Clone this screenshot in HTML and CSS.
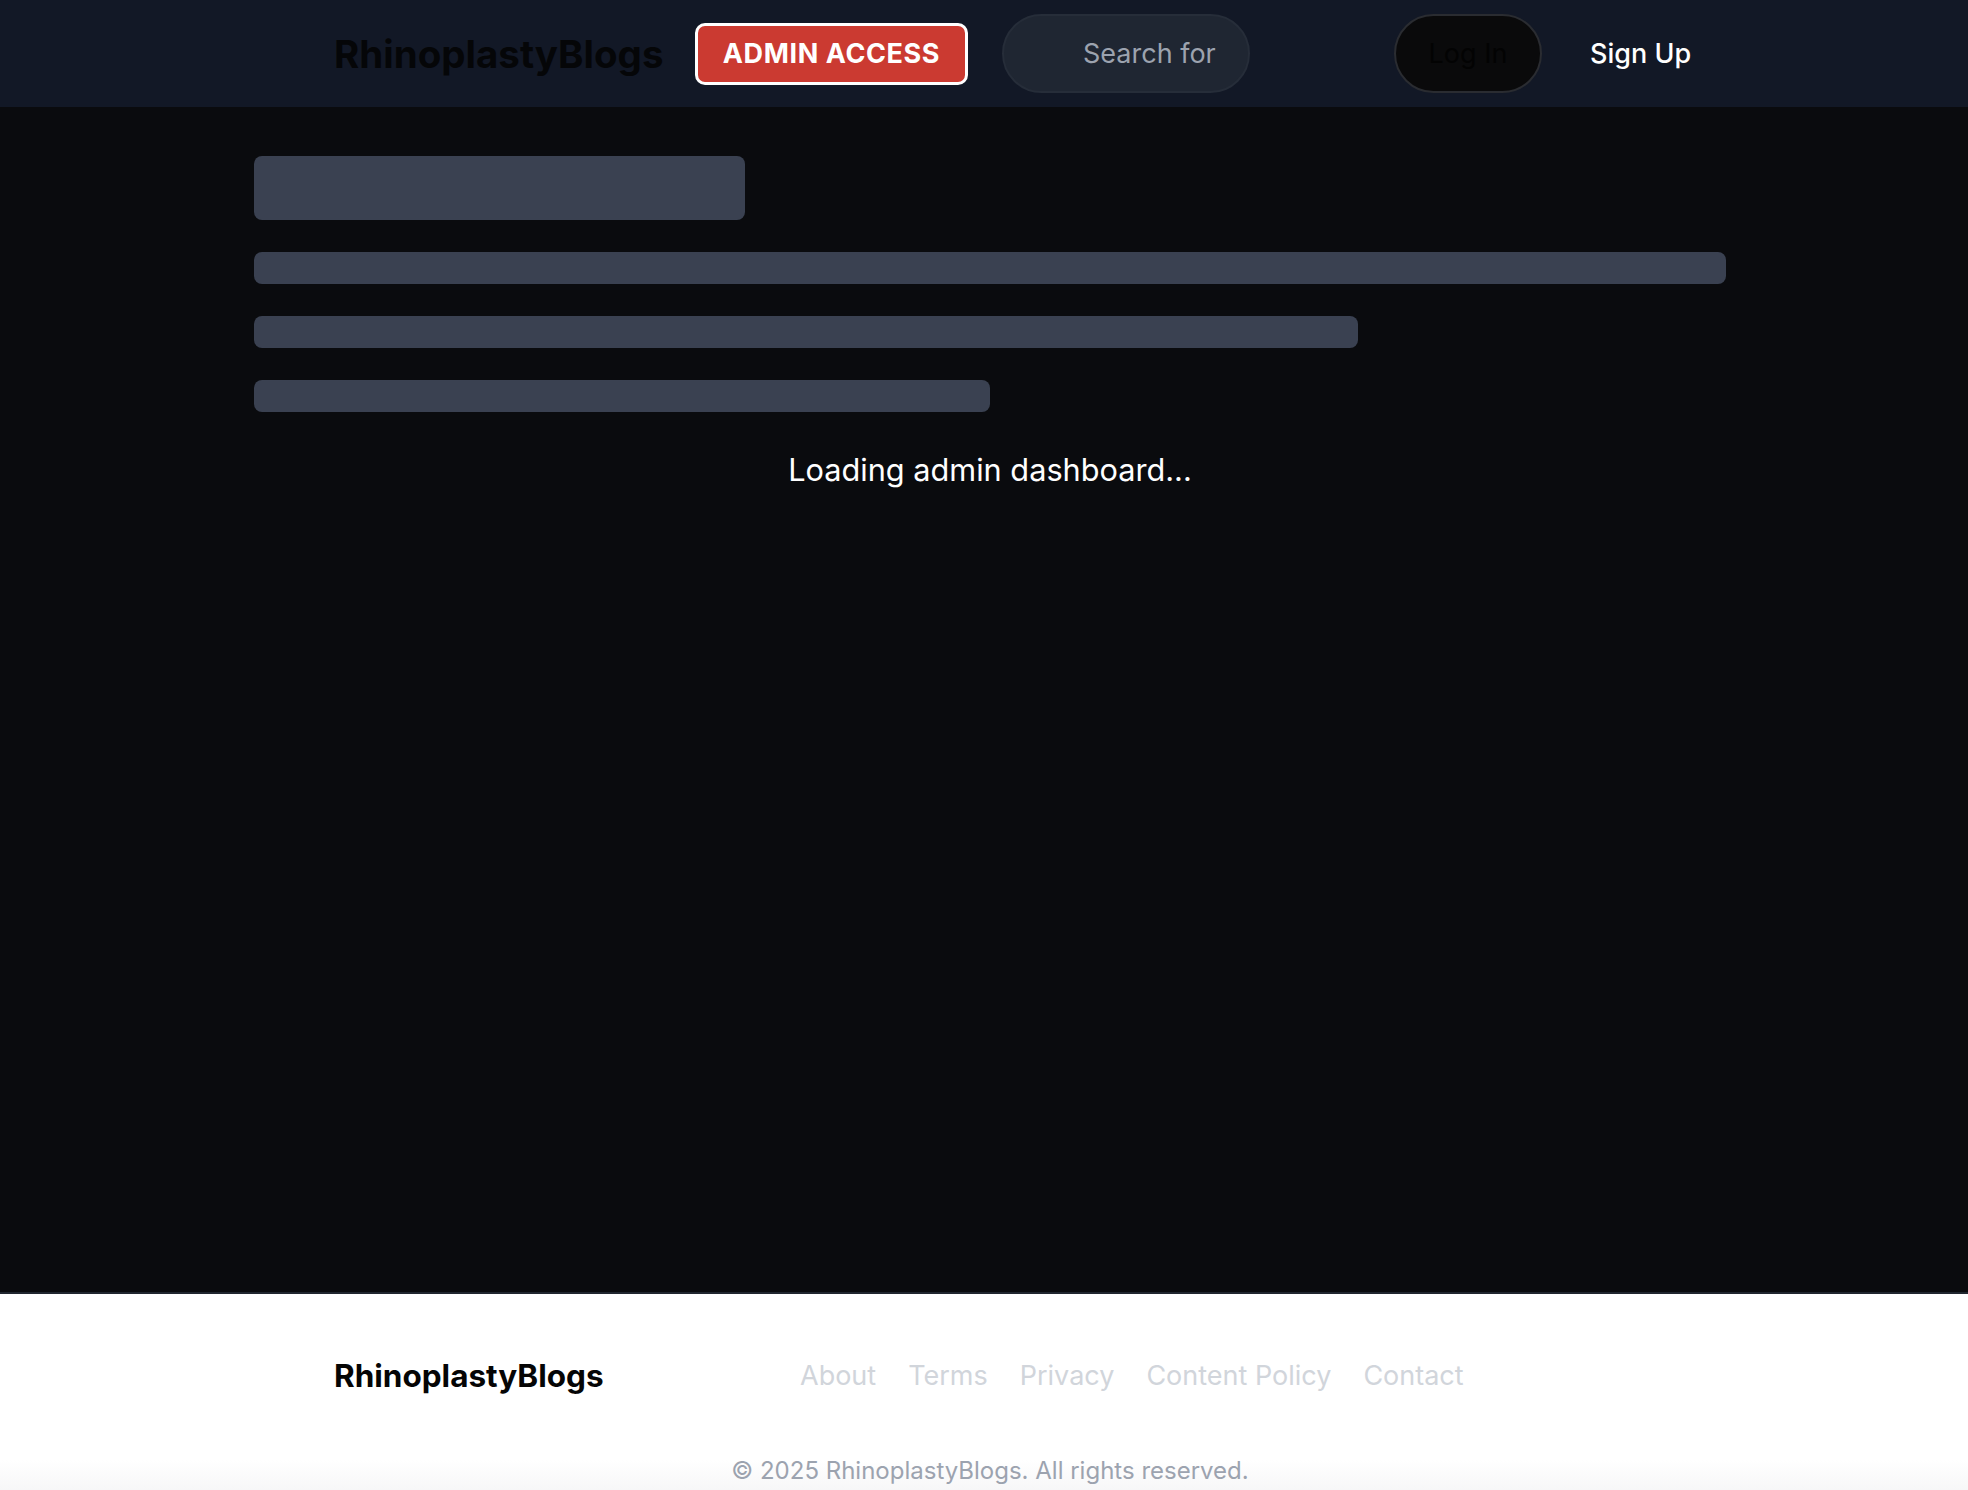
FILE: index.html
```html
<!DOCTYPE html>
<html lang="en">
<head>
<meta charset="utf-8">
<title>RhinoplastyBlogs – Admin</title>
<link rel="stylesheet" href="styles.css">
</head>
<body>
<header class="site-header">
  <a class="brand" href="#">RhinoplastyBlogs</a>
  <a class="admin-btn" href="#">ADMIN ACCESS</a>
  <div class="search"><span class="search-text">Search for</span></div>
  <a class="login-btn" href="#">Log In</a>
  <a class="signup" href="#">Sign Up</a>
</header>

<main class="main">
  <div class="container">
    <div class="skel skel-title"></div>
    <div class="skel skel-line w-full"></div>
    <div class="skel skel-line w-3q"></div>
    <div class="skel skel-line w-half"></div>
    <p class="loading">Loading admin dashboard...</p>
  </div>
</main>

<footer class="site-footer">
  <div class="container">
    <div class="footer-row">
      <div class="footer-brand">RhinoplastyBlogs</div>
      <nav class="footer-links">
        <a href="#">About</a>
        <a href="#">Terms</a>
        <a href="#">Privacy</a>
        <a href="#">Content Policy</a>
        <a href="#">Contact</a>
      </nav>
    </div>
    <p class="copyright">© 2025 RhinoplastyBlogs. All rights reserved.</p>
  </div>
</footer>
</body>
</html>
```

FILE: styles.css
```css
* { box-sizing: border-box; }
html, body { margin: 0; padding: 0; }
body {
  background: #0a0b0e;
  font-family: Inter, "Noto Sans", "Liberation Sans", sans-serif;
  color: #fff;
}
a { text-decoration: none; color: inherit; }

.site-header {
  height: 107px;
  background: #121826;
  display: flex;
  align-items: center;
  padding-left: 334px;
}
.brand {
  flex: none;
  width: 329px;
  margin-right: 32px;
  font-size: 38.5px;
  font-weight: 700;
  color: #050608;
  white-space: nowrap;
}
.admin-btn {
  flex: none;
  width: 273px;
  height: 62px;
  margin-right: 34px;
  border: 3px solid #ffffff;
  border-radius: 10px;
  background: #cb3a31;
  color: #fff;
  font-size: 27px;
  font-weight: 700;
  letter-spacing: 0.6px;
  display: flex;
  align-items: center;
  justify-content: center;
}
.search {
  flex: none;
  width: 248px;
  height: 79px;
  margin-right: 144px;
  border: 2px solid #262d39;
  border-radius: 40px;
  background: #1f2632;
  display: flex;
  align-items: center;
  padding-left: 79px;
}
.search-text {
  font-size: 27px;
  color: #9ca3af;
  white-space: nowrap;
}
.login-btn {
  flex: none;
  width: 148px;
  height: 79px;
  margin-right: 48px;
  border: 2px solid #2a2c31;
  border-radius: 40px;
  background: #0a0a0b;
  color: #030303;
  font-size: 27px;
  display: flex;
  align-items: center;
  justify-content: center;
}
.signup {
  flex: none;
  font-size: 27px;
  font-weight: 500;
  color: #ffffff;
  white-space: nowrap;
}

.main {
  min-height: 1185px;
  padding-top: 49px;
}
.container {
  width: 1472px;
  margin-left: 254px;
}
.skel {
  background: #3a4151;
  border-radius: 8px;
}
.skel-title {
  width: 33.33%;
  height: 64px;
  margin-bottom: 32px;
}
.skel-line {
  height: 32px;
  margin-bottom: 32px;
}
.w-full { width: 100%; }
.w-3q { width: 75%; }
.w-half { width: 50%; margin-bottom: 0; }
.loading {
  margin: 35px 0 0;
  text-align: center;
  font-size: 30.7px;
  line-height: 45px;
  color: #ffffff;
}

.site-footer {
  border-top: 2px solid #20262f;
  background: linear-gradient(to bottom, #ffffff 0, #ffffff 166px, #f6f6f7 200px, #f3f4f6 260px);
  min-height: 260px;
  padding-top: 63px;
}
.footer-row {
  display: flex;
  align-items: center;
  padding-left: 80px;
  height: 36px;
}
.footer-brand {
  flex: none;
  width: 466px;
  font-size: 31.5px;
  font-weight: 700;
  color: #050505;
  white-space: nowrap;
}
.footer-links {
  display: flex;
  gap: 32px;
}
.footer-links a {
  font-size: 27px;
  color: #d1d5db;
  white-space: nowrap;
}
.copyright {
  margin: 62px 0 0;
  text-align: center;
  font-size: 24px;
  line-height: 32px;
  color: #9ca3af;
}
```
